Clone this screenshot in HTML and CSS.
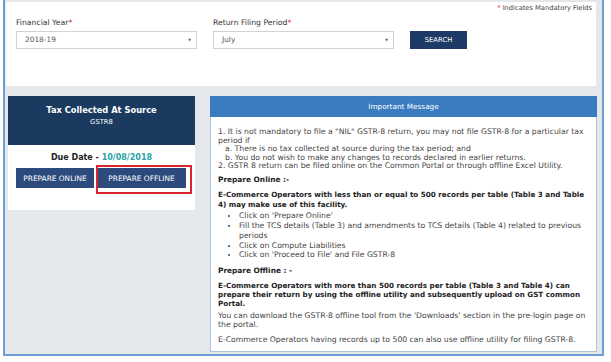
FILE: index.html
```html
<!DOCTYPE html>
<html lang="en">
<head>
<meta charset="utf-8">
<title>GSTR-8 Returns</title>
<link rel="stylesheet" href="styles.css">
</head>
<body>
<div class="frame">
  <section class="search-panel">
    <div class="mandatory"><span class="req">*</span> Indicates Mandatory Fields</div>
    <div class="form-row">
      <div class="field">
        <label class="field-label">Financial Year<span class="req">*</span></label>
        <div class="select"><span>2018-19</span><span class="caret">&#9660;</span></div>
      </div>
      <div class="field">
        <label class="field-label">Return Filing Period<span class="req">*</span></label>
        <div class="select"><span>July</span><span class="caret">&#9660;</span></div>
      </div>
      <button class="btn-search">SEARCH</button>
    </div>
  </section>

  <div class="content-row">
    <section class="return-card">
      <div class="card-head">
        <div class="card-title">Tax Collected At Source</div>
        <div class="card-sub">GSTR8</div>
      </div>
      <div class="card-body">
        <div class="due">Due Date - <span class="due-date">10/08/2018</span></div>
        <div class="card-actions">
          <button class="btn-prepare btn-online">PREPARE ONLINE</button>
          <div class="highlight-wrap">
            <button class="btn-prepare btn-offline">PREPARE OFFLINE</button>
            <span class="highlight"></span>
          </div>
        </div>
      </div>
    </section>

    <section class="message-panel">
      <div class="msg-head">Important Message</div>
      <div class="msg-body">
        <div class="intro">
          <div>1. It is not mandatory to file a "NIL" GSTR-8 return, you may not file GSTR-8 for a particular tax period if</div>
          <div class="sub-item">a. There is no tax collected at source during the tax period; and</div>
          <div class="sub-item">b. You do not wish to make any changes to records declared in earlier returns.</div>
          <div>2. GSTR 8 return can be filed online on the Common Portal or through offline Excel Utility.</div>
        </div>
        <h4 class="msg-heading">Prepare Online :-</h4>
        <p class="msg-strong">E-Commerce Operators with less than or equal to 500 records per table (Table 3 and Table 4) may make use of this facility.</p>
        <ul class="steps">
          <li>Click on 'Prepare Online'</li>
          <li>Fill the TCS details (Table 3) and amendments to TCS details (Table 4) related to previous periods</li>
          <li>Click on Compute Liabilities</li>
          <li>Click on 'Proceed to File' and File GSTR-8</li>
        </ul>
        <h4 class="msg-heading msg-heading-offline">Prepare Offline : -</h4>
        <p class="msg-strong msg-strong-offline">E-Commerce Operators with more than 500 records per table (Table 3 and Table 4) can prepare their return by using the offline utility and subsequently upload on GST common Portal.</p>
        <p class="msg-text">You can download the GSTR-8 offline tool from the 'Downloads' section in the pre-login page on the portal.</p>
        <p class="msg-text msg-last">E-Commerce Operators having records up to 500 can also use offline utility for filing GSTR-8.</p>
      </div>
    </section>
  </div>
</div>
</body>
</html>
```

FILE: styles.css
```css
html, body {
  margin: 0;
  padding: 0;
  background: #ffffff;
}

body {
  font-family: "DejaVu Sans", Verdana, sans-serif;
  font-size: 7.7px;
  color: #333333;
}

.frame {
  margin-left: 3px;
  width: 597px;
  height: 352px;
  padding-top: 2px;
  background: #e4e8eb;
  border: 2px solid #6c9fd6;
  border-top: 0;
}

.search-panel {
  margin: 0 6px 0 1px;
  height: 84px;
  box-sizing: border-box;
  padding: 2px 4px 0 10px;
  background: #ffffff;
}

.mandatory {
  text-align: right;
  font-size: 6.7px;
  line-height: 9.4px;
  color: #444;
}

.req {
  color: #e0222a;
}

.form-row {
  display: flex;
  align-items: flex-end;
  gap: 16px;
  margin-top: 5px;
}

.field-label {
  display: block;
  line-height: 9.4px;
  margin-bottom: 3px;
  color: #333;
}

.select {
  width: 181px;
  height: 18px;
  box-sizing: border-box;
  border: 1px solid #cfd3d6;
  display: flex;
  align-items: center;
  justify-content: space-between;
  padding: 0 5px 0 8px;
  font-size: 7.4px;
  color: #555;
}

.caret {
  font-size: 3.5px;
  color: #555;
}

.btn-search {
  width: 57px;
  height: 18px;
  border: 0;
  padding: 0;
  background: #1e3a66;
  color: #ffffff;
  font-family: inherit;
  font-size: 6.8px;
}

.content-row {
  display: flex;
  align-items: flex-start;
  gap: 15px;
  margin-top: 10px;
  padding-left: 3px;
}

.return-card {
  width: 187px;
}

.card-head {
  height: 49px;
  box-sizing: border-box;
  padding-top: 9px;
  background: #1b3a5f;
  color: #ffffff;
  text-align: center;
}

.card-title {
  font-size: 8.3px;
  font-weight: bold;
  line-height: 10px;
}

.card-sub {
  font-size: 6.8px;
  line-height: 8px;
  margin-top: 3px;
}

.card-body {
  height: 65px;
  box-sizing: border-box;
  padding-top: 8px;
  background: #ffffff;
}

.due {
  text-align: center;
  font-size: 8px;
  font-weight: bold;
  line-height: 10px;
  color: #222;
}

.due-date {
  color: #2aa3a8;
}

.card-actions {
  display: flex;
  gap: 3px;
  margin-top: 5px;
  padding-left: 8px;
}

.btn-prepare {
  height: 20px;
  border: 0;
  padding: 0;
  background: #2c4a7c;
  color: #ffffff;
  font-family: inherit;
  font-size: 7.4px;
}

.btn-online {
  width: 78px;
}

.btn-offline {
  width: 89px;
  display: block;
}

.highlight-wrap {
  position: relative;
}

.highlight {
  position: absolute;
  left: -1px;
  top: -3px;
  right: -6px;
  bottom: -6px;
  border: 2px solid #d8262f;
}

.message-panel {
  width: 387px;
  height: 256px;
  box-sizing: border-box;
  border: 1px solid #a9c3e0;
  border-top: 0;
  background: #ffffff;
}

.msg-head {
  height: 21px;
  line-height: 21px;
  margin: 0 -1px;
  background: #3b7cc0;
  color: #ffffff;
  font-size: 7.3px;
  text-align: center;
}

.msg-body {
  padding: 11px 4px 0 7px;
  line-height: 9.4px;
  color: #444;
}

.intro {
  line-height: 8.6px;
}

.sub-item {
  padding-left: 7px;
}

.msg-heading {
  margin: 4px 0 0;
  font-size: 7.4px;
  font-weight: bold;
  color: #222;
}

.msg-strong {
  margin: 6px 0 0;
  font-size: 7.2px;
  font-weight: bold;
  color: #222;
}

.steps {
  margin: 2px 0 0;
  padding-left: 21px;
  line-height: 9.8px;
}

.msg-heading-offline {
  margin-top: 6px;
}

.msg-strong-offline {
  margin-top: 5px;
}

.msg-text {
  margin: 2px 0 0;
}

.msg-last {
  margin-top: 5px;
}
```
